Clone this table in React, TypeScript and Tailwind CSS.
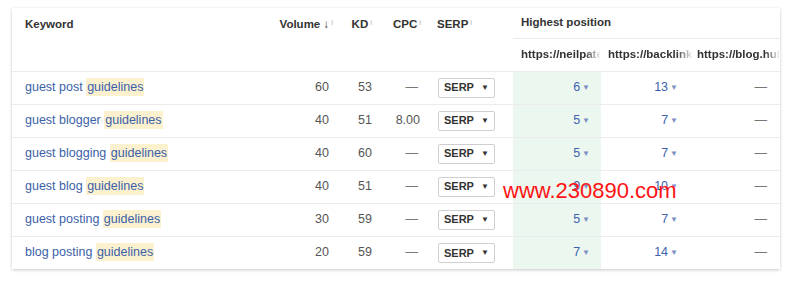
const rows = [
  { pre: "guest post", vol: 60, kd: 53, cpc: "—", pos: ["6", "13", "—"] },
  { pre: "guest blogger", vol: 40, kd: 51, cpc: "8.00", pos: ["5", "7", "—"] },
  { pre: "guest blogging", vol: 40, kd: 60, cpc: "—", pos: ["5", "7", "—"] },
  { pre: "guest blog", vol: 40, kd: 51, cpc: "—", pos: ["9", "10", "—"] },
  { pre: "guest posting", vol: 30, kd: 59, cpc: "—", pos: ["5", "7", "—"] },
  { pre: "blog posting", vol: 20, kd: 59, cpc: "—", pos: ["7", "14", "—"] },
]

function Info() {
  return <sup className="ml-[2px] text-[8px] font-normal text-[#b5b5b5] relative -top-[3px]">i</sup>
}

function Pos({ v }: { v: string }) {
  if (v === "—") return <span className="text-[#777]">—</span>
  return (
    <span className="text-[#3c62ad]">
      {v}
      <span className="ml-[2px] text-[8px] text-[#7d8fc4] align-[1px]">▼</span>
    </span>
  )
}

export default function App() {
  return (
    <div className="min-h-screen bg-white pt-[8px] pl-[12px] font-['Liberation_Sans',Arial,sans-serif]">
      <div className="relative w-[768px] bg-white shadow-[0_1px_3px_rgba(0,0,0,0.22)]">
        <table className="w-full table-fixed border-collapse text-[12.5px]">
          <colgroup>
            <col className="w-[258px]" />
            <col className="w-[67px]" />
            <col className="w-[39px]" />
            <col className="w-[48px]" />
            <col className="w-[89px]" />
            <col className="w-[88px]" />
            <col className="w-[92px]" />
            <col className="w-[87px]" />
          </colgroup>
          <thead className="text-[11.5px] font-bold text-[#333]">
            <tr className="h-[30px]">
              <th rowSpan={2} className="pl-[13px] text-left align-top pt-[8px]">Keyword</th>
              <th rowSpan={2} className="pr-[4px] text-right align-top pt-[8px]">
                Volume <span className="font-bold">↓</span><Info />
              </th>
              <th rowSpan={2} className="pr-[4px] text-right align-top pt-[8px]">KD<Info /></th>
              <th rowSpan={2} className="pr-[3px] text-right align-top pt-[8px]">CPC<Info /></th>
              <th rowSpan={2} className="pl-[13px] text-left align-top pt-[8px]">SERP<Info /></th>
              <th colSpan={3} className="pl-[8px] text-left border-b border-[#ebebeb]">Highest position</th>
            </tr>
            <tr className="h-[33px] border-b border-[#ebebeb]">
              <th className="pl-[8px] text-left whitespace-nowrap overflow-hidden [mask-image:linear-gradient(to_right,black_82%,transparent)]">https://neilpatel.com</th>
              <th className="pl-[7px] text-left whitespace-nowrap overflow-hidden [mask-image:linear-gradient(to_right,black_82%,transparent)]">https://backlinko.com</th>
              <th className="pl-[4px] text-left whitespace-nowrap overflow-hidden [mask-image:linear-gradient(to_right,black_82%,transparent)]">https://blog.hubspot.com</th>
            </tr>
          </thead>
          <tbody className="text-[#555]">
            {rows.map((r, i) => (
              <tr key={i} className={`h-[33px] ${i < rows.length - 1 ? "border-b border-[#ececec]" : ""}`}>
                <td className="pl-[13px] text-[#3c5fa9]">
                  {r.pre} <span className="bg-[#fbf1cf] px-[1px] py-[2px]">guidelines</span>
                </td>
                <td className="pr-[8px] text-right">{r.vol}</td>
                <td className="pr-[4px] text-right">{r.kd}</td>
                <td className="pr-[4px] text-right">{r.cpc === "—" ? <span className="pr-[2px] text-[#777]">—</span> : r.cpc}</td>
                <td className="pl-[14px]">
                  <div className="flex h-[20px] w-[57px] items-center justify-between rounded-[2px] border border-[#cfcfcf] px-[5px] text-[11px] font-bold text-[#333]">
                    <span>SERP</span>
                    <span className="text-[8px]">▼</span>
                  </div>
                </td>
                <td className="bg-[#ecf8ef] pr-[11px] text-right"><Pos v={r.pos[0]} /></td>
                <td className="pr-[15px] text-right"><Pos v={r.pos[1]} /></td>
                <td className="pr-[13px] text-right"><Pos v={r.pos[2]} /></td>
              </tr>
            ))}
          </tbody>
        </table>
        <div className="absolute left-[491px] top-[172px] text-[22px] leading-none text-[#ff1414]">
          www.230890.com
        </div>
      </div>
    </div>
  )
}
